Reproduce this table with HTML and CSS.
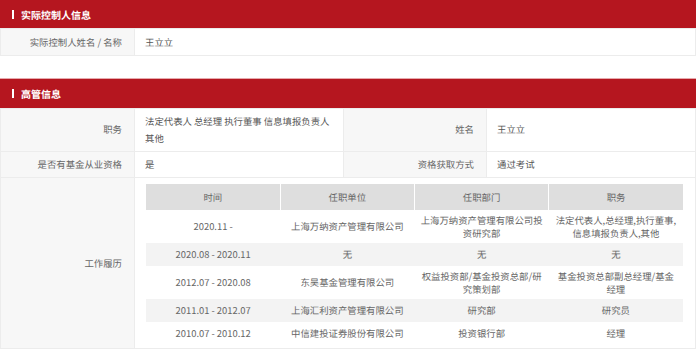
FILE: index.html
```html
<!DOCTYPE html>
<html lang="zh-CN">
<head>
<meta charset="utf-8">
<title>实际控制人信息</title>
<link rel="stylesheet" href="styles.css">
</head>
<body>
<div class="panel">
  <section class="section">
    <h2 class="section-title"><span class="title-bar"></span>实际控制人信息</h2>
    <table class="info">
      <colgroup><col class="c-label"><col></colgroup>
      <tr>
        <th class="label">实际控制人姓名 / 名称</th>
        <td class="value">王立立</td>
      </tr>
    </table>
  </section>

  <section class="section">
    <h2 class="section-title"><span class="title-bar"></span>高管信息</h2>
    <table class="info">
      <colgroup><col class="c-label"><col class="c-value"><col class="c-label2"><col></colgroup>
      <tr>
        <th class="label">职务</th>
        <td class="value">法定代表人 总经理 执行董事 信息填报负责人 其他</td>
        <th class="label">姓名</th>
        <td class="value">王立立</td>
      </tr>
      <tr>
        <th class="label">是否有基金从业资格</th>
        <td class="value">是</td>
        <th class="label">资格获取方式</th>
        <td class="value">通过考试</td>
      </tr>
      <tr>
        <th class="label">工作履历</th>
        <td class="value history-cell" colspan="3">
          <table class="history">
            <thead>
              <tr><th>时间</th><th>任职单位</th><th>任职部门</th><th>职务</th></tr>
            </thead>
            <tbody>
              <tr><td>2020.11 -</td><td>上海万纳资产管理有限公司</td><td>上海万纳资产管理有限公司投资研究部</td><td>法定代表人,总经理,执行董事,信息填报负责人,其他</td></tr>
              <tr class="alt"><td>2020.08 - 2020.11</td><td>无</td><td>无</td><td>无</td></tr>
              <tr><td>2012.07 - 2020.08</td><td>东吴基金管理有限公司</td><td>权益投资部/基金投资总部/研究策划部</td><td>基金投资总部副总经理/基金经理</td></tr>
              <tr class="alt"><td>2011.01 - 2012.07</td><td>上海汇利资产管理有限公司</td><td>研究部</td><td>研究员</td></tr>
              <tr><td>2010.07 - 2010.12</td><td>中信建投证券股份有限公司</td><td>投资银行部</td><td>经理</td></tr>
            </tbody>
          </table>
        </td>
      </tr>
    </table>
  </section>
</div>
</body>
</html>
```

FILE: styles.css
```css
* { box-sizing: border-box; }

body {
  margin: 0;
  background: #fff;
  font-family: "Noto Sans CJK SC", "Noto Sans", sans-serif;
  font-size: 9.4px;
  color: #666;
  text-rendering: geometricPrecision;
}

.panel {
  width: 696px;
}

.section + .section {
  margin-top: 22px;
  border-top: 1px solid #e6a9ad;
}

.section-title {
  margin: 0;
  height: 28px;
  background: #b5161f;
  color: #fff;
  font-size: 10px;
  font-weight: bold;
  display: flex;
  align-items: center;
  padding-left: 12px;
}

.section + .section .section-title {
  height: 29px;
}

.title-bar {
  width: 2px;
  height: 9px;
  background: #fff;
  margin-right: 7px;
}

.info {
  width: 696px;
  border-collapse: collapse;
  table-layout: fixed;
}

.c-label { width: 134px; }
.c-value { width: 209px; }
.c-label2 { width: 143px; }

.info .label,
.info .value {
  border: 1px solid #ececec;
  padding: 4.5px 11px 4.5px 10px;
  line-height: 16.5px;
  vertical-align: middle;
}

.info .label {
  background: #f7f7f7;
  font-weight: normal;
  text-align: right;
  padding-right: 12px;
  color: #666;
}

.info .value {
  background: #fff;
  text-align: left;
  color: #555;
}

.info .history-cell {
  padding: 6px 12px 3px 11px;
}

.history {
  width: 100%;
  border-collapse: collapse;
  table-layout: fixed;
}

.history th,
.history td {
  text-align: center;
  vertical-align: middle;
  line-height: 12.5px;
  padding: 4px 5px;
  color: #666;
  font-weight: normal;
  word-break: break-all;
}

.history th {
  background: #dedede;
  height: 26px;
  border-left: 1px solid #fff;
}

.history th:first-child {
  border-left: none;
}

.history tbody tr {
  height: 23px;
}

.history tr.alt td {
  background: #f3f3f3;
}
```
